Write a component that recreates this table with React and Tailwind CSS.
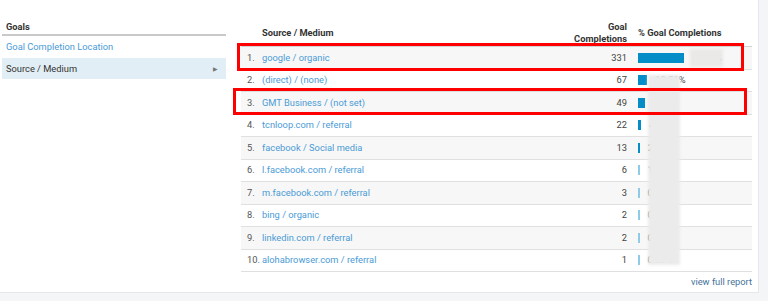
const rows = [
  { name: 'google / organic', count: 331, pct: '66.73%' },
  { name: '(direct) / (none)', count: 67, pct: '13.51%' },
  { name: 'GMT Business / (not set)', count: 49, pct: '9.88%' },
  { name: 'tcnloop.com / referral', count: 22, pct: '4.44%' },
  { name: 'facebook / Social media', count: 13, pct: '2.62%' },
  { name: 'l.facebook.com / referral', count: 6, pct: '1.21%' },
  { name: 'm.facebook.com / referral', count: 3, pct: '0.60%' },
  { name: 'bing / organic', count: 2, pct: '0.40%' },
  { name: 'linkedin.com / referral', count: 2, pct: '0.40%' },
  { name: 'alohabrowser.com / referral', count: 1, pct: '0.20%' },
];

function Bar({ count }) {
  const w = Math.max(count * 0.139, 1.5);
  return (
    <span
      className={count > 10 ? 'inline-block h-[10px] shrink-0 bg-[#058dc7]' : 'inline-block h-[10px] shrink-0 bg-[#8fcbe6]'}
      style={{ width: `${w}px` }}
    />
  );
}

export default function App() {
  return (
    <div className="relative h-[301px] w-[768px] overflow-hidden bg-[#f4f5f7] font-['Roboto',sans-serif] text-[9.3px]">
      <div className="flex h-[293px] w-[759px] border-b border-r border-[#e6e7ea] bg-white pt-[20px]">
        {/* left menu */}
        <div className="ml-[2px] w-[224px]">
          <div className="h-[16px] border-b-2 border-[#c9c9c9] pl-[4px] font-bold leading-[14px] text-[#333]">Goals</div>
          <div className="flex h-[22px] items-center pl-[4px] text-[#4a9bd6]">Goal Completion Location</div>
          <div className="flex h-[21px] items-center justify-between bg-[#e2eef5] pl-[4px] pr-[8px] text-[#333]">
            <span>Source / Medium</span>
            <span className="text-[6px] text-[#777]">▶</span>
          </div>
        </div>

        {/* table */}
        <div className="ml-[15px] flex w-[511px] flex-col">
          <div className="flex h-[27px] items-center border-b border-[#d2d2d2] font-bold text-[#333]">
            <div className="w-[21px]" />
            <div className="flex-1">Source / Medium</div>
            <div className="w-[120px] text-right leading-[12px]">
              Goal
              <br />
              Completions
            </div>
            <div className="w-[125px] pl-[11px]">% Goal Completions</div>
          </div>
          {rows.map((r, i) => (
            <div
              key={r.name}
              className={`flex h-[22.5px] items-center border-b border-[#e0e0e0] ${i % 2 === 0 ? 'bg-[#f7f7f7]' : 'bg-white'}`}
            >
              <div className="w-[21px] pl-[6px] text-[#555]">{i + 1}.</div>
              <div className="flex-1 text-[#4a9bd6]">{r.name}</div>
              <div className="w-[120px] text-right text-[#444]">{r.count}</div>
              <div className="flex w-[125px] items-center gap-[8px] pl-[11px] text-[#444]">
                <Bar count={r.count} />
                <span>{r.pct}</span>
              </div>
            </div>
          ))}
          <div className="mt-[3px] text-right text-[#46729a]">view full report</div>
        </div>
      </div>

      {/* blurred-out percentages */}
      <div className="absolute left-[648px] top-[75px] h-[190px] w-[32px] bg-[#ebebeb] blur-[1.5px]" />
      <div className="absolute left-[690px] top-[49px] h-[18px] w-[33px] bg-[#ebe9e7] blur-[1.5px]" />

      {/* annotation boxes */}
      <div className="absolute left-[237px] top-[43px] h-[28px] w-[507px] border-[3px] border-[#ff0000]" />
      <div className="absolute left-[233px] top-[88px] h-[27px] w-[514px] border-[3px] border-[#ff0000]" />
    </div>
  );
}
